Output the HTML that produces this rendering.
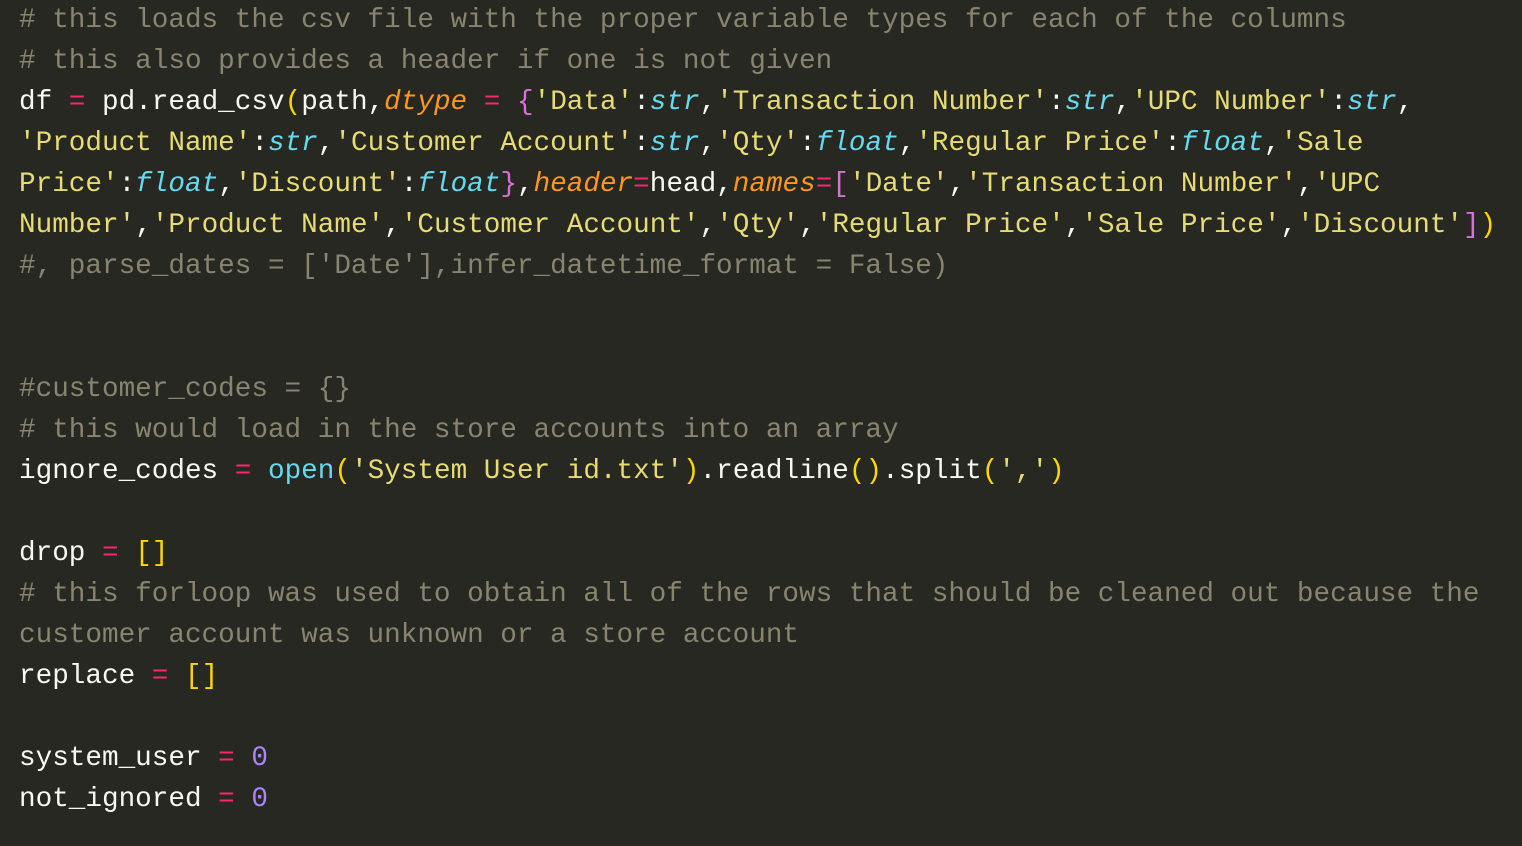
<!DOCTYPE html>
<html><head><meta charset="utf-8"><style>
html,body{margin:0;padding:0;background:#272822;width:1522px;height:846px;overflow:hidden}
pre{margin:0;position:absolute;left:19px;top:0px;font-family:"Liberation Mono",monospace;font-size:27.67px;line-height:41px;color:#f8f8f2;white-space:pre}
.c{color:#88846f}.k{color:#f92672}.s{color:#e6db74}.t{color:#66d9ef;font-style:italic}.b{color:#66d9ef}.o{color:#fd971f;font-style:italic}.n{color:#ae81ff}.y{color:#ffd700}.m{color:#da70d6}
</style></head><body><pre><span class="c"># this loads the csv file with the proper variable types for each of the columns</span>
<span class="c"># this also provides a header if one is not given</span>
df <span class="k">=</span> pd.read_csv<span class="y">(</span>path,<span class="o">dtype</span> <span class="k">=</span> <span class="m">{</span><span class="s">'Data'</span>:<span class="t">str</span>,<span class="s">'Transaction Number'</span>:<span class="t">str</span>,<span class="s">'UPC Number'</span>:<span class="t">str</span>,
<span class="s">'Product Name'</span>:<span class="t">str</span>,<span class="s">'Customer Account'</span>:<span class="t">str</span>,<span class="s">'Qty'</span>:<span class="t">float</span>,<span class="s">'Regular Price'</span>:<span class="t">float</span>,<span class="s">'Sale</span>
<span class="s">Price'</span>:<span class="t">float</span>,<span class="s">'Discount'</span>:<span class="t">float</span><span class="m">}</span>,<span class="o">header</span><span class="k">=</span>head,<span class="o">names</span><span class="k">=</span><span class="m">[</span><span class="s">'Date'</span>,<span class="s">'Transaction Number'</span>,<span class="s">'UPC</span>
<span class="s">Number'</span>,<span class="s">'Product Name'</span>,<span class="s">'Customer Account'</span>,<span class="s">'Qty'</span>,<span class="s">'Regular Price'</span>,<span class="s">'Sale Price'</span>,<span class="s">'Discount'</span><span class="m">]</span><span class="y">)</span>
<span class="c">#, parse_dates = ['Date'],infer_datetime_format = False)</span>


<span class="c">#customer_codes = {}</span>
<span class="c"># this would load in the store accounts into an array</span>
ignore_codes <span class="k">=</span> <span class="b">open</span><span class="y">(</span><span class="s">'System User id.txt'</span><span class="y">)</span>.readline<span class="y">()</span>.split<span class="y">(</span><span class="s">','</span><span class="y">)</span>

drop <span class="k">=</span> <span class="y">[]</span>
<span class="c"># this forloop was used to obtain all of the rows that should be cleaned out because the</span>
<span class="c">customer account was unknown or a store account</span>
replace <span class="k">=</span> <span class="y">[]</span>

system_user <span class="k">=</span> <span class="n">0</span>
not_ignored <span class="k">=</span> <span class="n">0</span>
</pre></body></html>
